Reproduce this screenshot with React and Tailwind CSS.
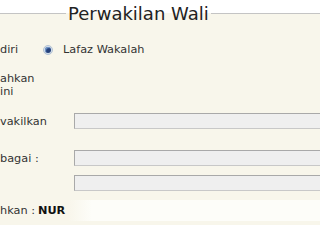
export default function App() {
     return (
          <div className="w-full min-w-[225px] h-[225px] overflow-hidden bg-white text-[#333] font-['DejaVu_Sans',Verdana,sans-serif]">
               <fieldset className="mt-[4px] w-full min-w-0 border-t border-[#c4c4c4] bg-[#f8f6eb] pb-[20px]">
                    <legend className="ml-[66px] px-[2px] text-[18px] leading-[19px] text-[#222]">Perwakilan Wali</legend>

                    <div className="flex flex-col overflow-hidden text-[11.3px] leading-[13px] pt-[20px]">
                         {/* pilihan */}
                         <div className="flex items-center h-[13px]">
                              <span className="w-[43px]">diri</span>
                              <span className="w-[10px] h-[10px] rounded-full bg-[#d4dfeb] border border-[#b5c3d3] flex items-center justify-center">
                                   <span className="w-[6px] h-[6px] rounded-full bg-[#24407a] shadow-[inset_1px_1px_1px_rgba(140,180,230,0.8)]"></span>
                              </span>
                              <span className="ml-[10px]">Lafaz Wakalah</span>
                         </div>

                         <div className="mt-[16px]">
                              <div>ahkan</div>
                              <div>ini</div>
                         </div>

                         <div className="mt-[15px] flex items-center">
                              <span className="w-[74px] shrink-0">vakilkan</span>
                              <div className="flex-1 -mr-[4px] h-[16px] border border-[#a9a9a9] border-b-[#c8c8c8] bg-[#efefef]"></div>
                         </div>

                         <div className="mt-[21px] flex items-center">
                              <span className="w-[74px] shrink-0">bagai :</span>
                              <div className="flex-1 -mr-[4px] h-[16px] border border-[#a9a9a9] border-b-[#c8c8c8] bg-[#efefef]"></div>
                         </div>

                         <div className="mt-[9px] flex items-center">
                              <span className="w-[74px] shrink-0"></span>
                              <div className="flex-1 -mr-[4px] h-[16px] border border-[#a9a9a9] border-b-[#c8c8c8] bg-[#efefef]"></div>
                         </div>

                         <div className="mt-[9px] h-[21px] flex items-center bg-[linear-gradient(to_right,#f8f6eb_68px,#fdfdf9_92px)]">
                              <span>hkan : </span>
                              <span className="font-bold text-[#111] ml-[3px]">NUR</span>
                         </div>
                    </div>
               </fieldset>
          </div>
     );
}
